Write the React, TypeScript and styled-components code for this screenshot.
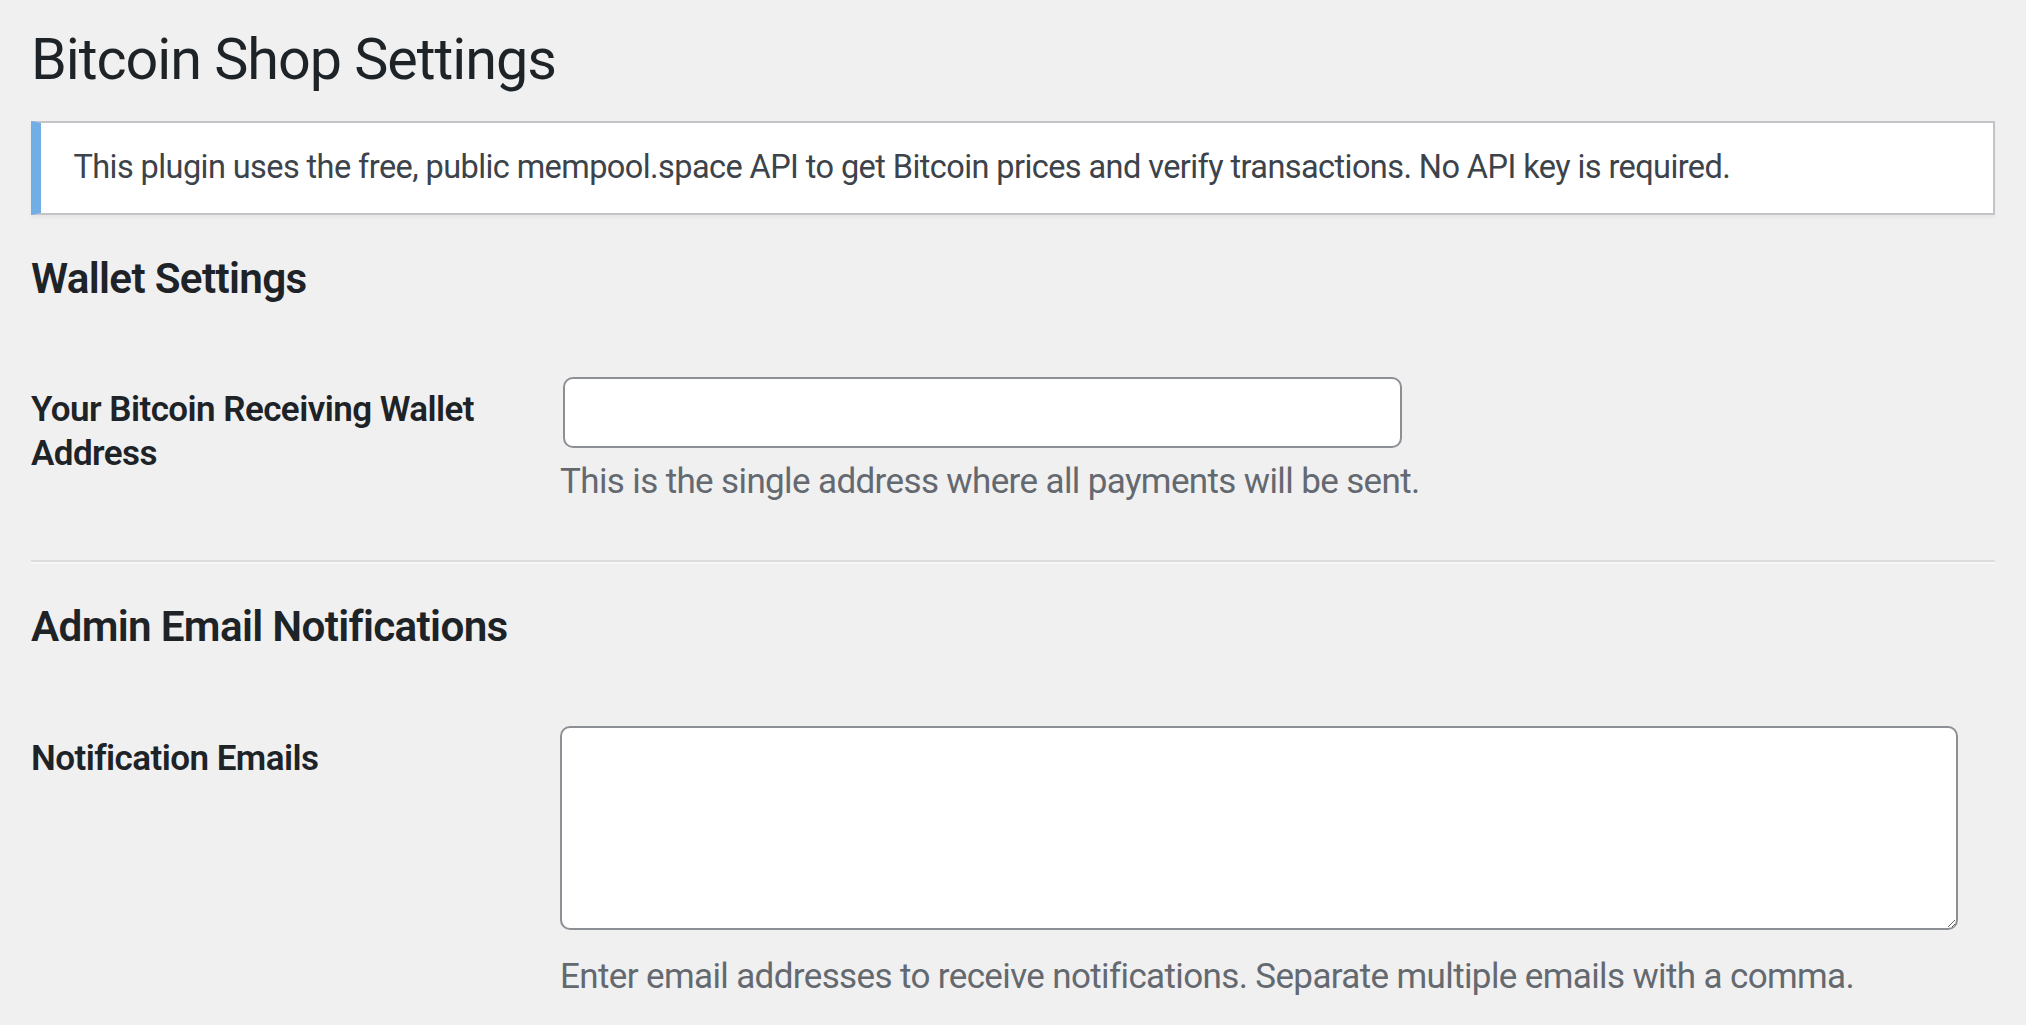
import React from 'react';
import styled, { createGlobalStyle } from 'styled-components';

// The reference renders Roboto a touch tighter than the installed cut.
const TRACKING = '-0.018em';

const GlobalStyle = createGlobalStyle`
  html,
  body {
    margin: 0;
    padding: 0;
    background: #f0f0f1;
  }

  body {
    font-family: Roboto, "Noto Sans", "Liberation Sans", sans-serif;
    color: #3c434a;
  }
`;

const Wrap = styled.div`
  padding: 0 31px;
  min-height: 1025px;
  box-sizing: border-box;
`;

const PageTitle = styled.h1`
  margin: 0;
  padding: 23px 0 10px;
  font-size: 57.5px;
  line-height: 74.75px;
  font-weight: 400;
  letter-spacing: ${TRACKING};
  color: #1d2327;
`;

const Notice = styled.div`
  margin-top: 13px;
  background: #fff;
  border: 2px solid #c3c4c7;
  border-left: 10px solid #72aee6;
  box-shadow: 0 2.5px 2.5px rgba(0, 0, 0, 0.04);
  padding: 20.5px 30px 20.5px 32.5px;
`;

const NoticeText = styled.p`
  margin: 0;
  font-size: 32.5px;
  line-height: 48.75px;
  letter-spacing: ${TRACKING};
  color: #3c434a;
`;

const SectionTitle = styled.h2<{ $gap: number }>`
  margin: ${(p) => p.$gap}px 0 0;
  font-size: 42.25px;
  line-height: 45.5px;
  font-weight: 600;
  letter-spacing: -0.016em;
  color: #1d2327;
`;

const FormRow = styled.div`
  display: grid;
  grid-template-columns: 504px 1fr;
  margin-top: 38.5px;
`;

const RowLabel = styled.label`
  box-sizing: border-box;
  padding: 48.5px 25px 0 0;
  font-size: 35px;
  line-height: 44px;
  font-weight: 600;
  letter-spacing: -0.016em;
  color: #1d2327;
`;

const RowField = styled.div`
  display: flex;
  flex-direction: column;
  align-items: flex-start;
  padding: 37.5px 25px;
  min-width: 0;
`;

const TextInput = styled.input`
  box-sizing: border-box;
  width: 839px;
  height: 71px;
  margin: 0 0 0 2.5px;
  padding: 0 20px;
  background: #fff;
  border: 2px solid #8c8f94;
  border-radius: 10px;
  font-family: inherit;
  font-size: 35px;
  color: #2c3338;
  outline: none;
`;

const TextArea = styled.textarea`
  box-sizing: border-box;
  width: calc(99% + 2px);
  height: 204px;
  margin: 0;
  padding: 5px 20px;
  background: #fff;
  border: 2px solid #8c8f94;
  border-radius: 10px;
  font-family: inherit;
  font-size: 35px;
  color: #2c3338;
  outline: none;
`;

const Description = styled.p<{ $gap: number }>`
  margin: ${(p) => p.$gap}px 0 0;
  font-size: 35px;
  line-height: 52.5px;
  letter-spacing: ${TRACKING};
  color: #646970;
`;

const Divider = styled.hr`
  margin: 14px 0 0;
  border: 0;
  border-top: 2.5px solid #dcdcde;
  border-bottom: 2.5px solid #f6f7f7;
`;

export default function App() {
  return (
    <>
      <GlobalStyle />
      <Wrap>
        <PageTitle>Bitcoin Shop Settings</PageTitle>

        <Notice>
          <NoticeText>
            This plugin uses the free, public mempool.space API to get Bitcoin prices and verify
            transactions. No API key is required.
          </NoticeText>
        </Notice>

        <SectionTitle $gap={41}>Wallet Settings</SectionTitle>
        <FormRow>
          <RowLabel htmlFor="wallet-address">Your Bitcoin Receiving Wallet Address</RowLabel>
          <RowField>
            <TextInput id="wallet-address" type="text" />
            <Description $gap={8}>This is the single address where all payments will be sent.</Description>
          </RowField>
        </FormRow>

        <Divider />

        <SectionTitle $gap={40}>Admin Email Notifications</SectionTitle>
        <FormRow>
          <RowLabel htmlFor="notification-emails">Notification Emails</RowLabel>
          <RowField>
            <TextArea id="notification-emails" rows={5} />
            <Description $gap={21}>
              Enter email addresses to receive notifications. Separate multiple emails with a comma.
            </Description>
          </RowField>
        </FormRow>
      </Wrap>
    </>
  );
}
